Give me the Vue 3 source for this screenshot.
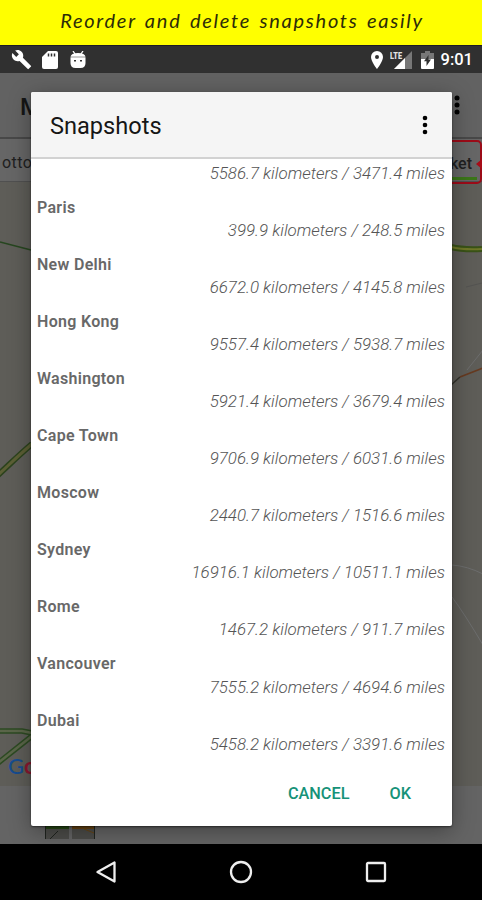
<script setup>
import { ref } from 'vue';

// The first entry is scrolled under the header, only its distance shows
const snapshots = ref([
  { id: 1, name: '', distance: '5586.7 kilometers / 3471.4 miles' },
  { id: 2, name: 'Paris', distance: '399.9 kilometers / 248.5 miles' },
  { id: 3, name: 'New Delhi', distance: '6672.0 kilometers / 4145.8 miles' },
  { id: 4, name: 'Hong Kong', distance: '9557.4 kilometers / 5938.7 miles' },
  { id: 5, name: 'Washington', distance: '5921.4 kilometers / 3679.4 miles' },
  { id: 6, name: 'Cape Town', distance: '9706.9 kilometers / 6031.6 miles' },
  { id: 7, name: 'Moscow', distance: '2440.7 kilometers / 1516.6 miles' },
  { id: 8, name: 'Sydney', distance: '16916.1 kilometers / 10511.1 miles' },
  { id: 9, name: 'Rome', distance: '1467.2 kilometers / 911.7 miles' },
  { id: 10, name: 'Vancouver', distance: '7555.2 kilometers / 4694.6 miles' },
  { id: 11, name: 'Dubai', distance: '5458.2 kilometers / 3391.6 miles' },
]);
</script>

<template>
  <div class="page">
    <div class="banner"><span>Reorder and delete snapshots easily</span></div>

    <div class="status-bar">
      <svg class="wrench" width="21" height="21" viewBox="0 0 24 24">
        <path fill="#fff" d="M22.7 19l-9.1-9.1c.9-2.3.4-5-1.5-6.9-2-2-5-2.4-7.4-1.3L9 6 6 9 1.6 4.7C.4 7.1.9 10.1 2.9 12.100c1.900 1.900 4.600 2.400 6.900 1.500l9.100 9.100c.4.4 1 .4 1.400 0l2.300-2.300c.5-.4.5-1.100.1-1.400z" />
      </svg>
      <svg class="sd-card" width="16" height="18" viewBox="0 0 16 18">
        <path fill="#fff" d="M6 0h8q2 0 2 2v14q0 2-2 2H2q-2 0-2-2V6z" />
        <path stroke="#303030" stroke-width="1.500" d="M6.500 2.500v3M9.500 2.500v3M12.500 2.500v3" />
      </svg>
      <svg class="android" width="16" height="18" viewBox="0 0 16 18">
        <path stroke="#fff" stroke-width="1.300" d="M3 0l2 3M13 0l-2 3" />
        <path fill="#fff" d="M.5 5.800Q1 2 8 2t7.500 3.800z" />
        <path fill="#fff" d="M.5 6.300h15V12q0 5-5 5h-5q-5 0-5-5z" />
        <path fill="#303030" d="M4 9h2v1.500H4zM10 9h2v1.500h-2z" />
      </svg>
      <span class="spacer"></span>
      <svg class="pin" width="12" height="18" viewBox="0 0 12 18">
        <path fill="#fff" fill-rule="evenodd" d="M6 0a6 6 0 0 0-6 6c0 4.500 6 12 6 12s6-7.500 6-12a6 6 0 0 0-6-6zm0 4a2 2 0 1 1 0 4 2 2 0 0 1 0-4z" />
      </svg>
      <svg class="signal" width="22" height="18" viewBox="0 0 22 18">
        <path fill="#777" d="M22 0v18H4z" />
        <path fill="#fff" d="M15 7v11H4z" />
        <path fill="#303030" d="M0 0h13v8H0z" />
        <text x="0" y="7.500" font-size="9.500" font-weight="900" font-family="Roboto, sans-serif" fill="#e4e4e4" textLength="12" lengthAdjust="spacingAndGlyphs">LTE</text>
      </svg>
      <svg class="battery" width="13" height="18" viewBox="0 0 13 18">
        <path fill="#777" d="M4 0h5v2h4v6H0V2h4z" />
        <path fill="#fff" d="M0 8h13v9q0 1-1 1H1q-1 0-1-1z" />
        <path fill="#303030" d="M7.500 4v4.500H10L5.500 15v-4.700H3z" />
      </svg>
      <span class="clock">9:01</span>
    </div>

    <div class="screen">
      <div class="app-bar">
        <span class="app-title">M</span>
        <svg width="6" height="20" viewBox="0 0 6 20">
          <circle cx="3" cy="3" r="2.500" /><circle cx="3" cy="10" r="2.500" /><circle cx="3" cy="17" r="2.500" />
        </svg>
      </div>
      <div class="tabs">
        <span class="tab-left">otto</span>
        <span class="tab-right">ket
          <svg class="marker" width="6" height="10" viewBox="0 0 6 10"><path fill="#a80c18" d="M6 0v10L0 5z" /></svg>
        </span>
      </div>
      <div class="map">
        <svg width="482" height="604" viewBox="0 0 482 604" fill="none">
          <path stroke="#26461f" stroke-width="1.500" d="M0 60l31 8" />
          <path stroke="#2c431d" stroke-width="6" d="M-2 293C10 282 20 272 32 262" />
          <path stroke="#5c5f35" stroke-width="3" d="M-2 293C10 282 20 272 32 262" />
          <path stroke="#2c4a22" stroke-width="5.500" d="M0 549h22l10 2M-2 581L32 554" />
          <path stroke="#5a6549" stroke-width="2.500" d="M0 549h22l10 2M-2 581L32 554" />
          <path stroke="#395217" stroke-width="6" d="M451 65q12 3 31 2" />
          <path stroke="#6e7728" stroke-width="2" d="M451 65q12 3 31 2" />
          <path stroke="#6c6d6d" d="M467 188l16-20M452 383q15 1 31 9M452 415q12 16 31 48" />
          <path stroke="#545451" d="M466 105l16-4" />
          <path stroke="#30312a" stroke-width="1.500" d="M451 203l9-8" />
          <path stroke="#663a20" stroke-width="1.800" d="M460 195l23-9" />
        </svg>
        <span class="google"><b>G</b><i>o</i></span>
      </div>
      <div class="strip">
        <svg width="50" height="14" viewBox="0 0 50 14">
          <path fill="#4c4c49" d="M0 1h24v12H0zM27 1h23v12H27z" />
          <path fill="#284916" d="M0 0h24v3H0z" /><path fill="#684514" d="M27 0h23v3H27z" />
          <path stroke="#20241f" fill="none" d="M.5 0v13M5 13l8-8M49.500 0v13" />
          <path stroke="#684514" d="M39 3l10 4" />
        </svg>
      </div>

      <div class="dialog">
        <div class="dialog-header">
          <h2>Snapshots</h2>
          <svg width="6" height="20" viewBox="0 0 6 20">
            <circle cx="3" cy="3" r="2.300" /><circle cx="3" cy="10" r="2.300" /><circle cx="3" cy="17" r="2.300" />
          </svg>
        </div>
        <div class="snapshot-list">
          <div v-for="snapshot in snapshots" :key="snapshot.id" class="snapshot">
            <span v-if="snapshot.name" class="name">{{ snapshot.name }}</span>
            <span class="distance">{{ snapshot.distance }}</span>
          </div>
        </div>
        <div class="actions">
          <button type="button">CANCEL</button>
          <button type="button">OK</button>
        </div>
      </div>
    </div>

    <div class="nav-bar">
      <svg width="22" height="24" viewBox="0 0 22 24"><path d="M19.500 2.500v19L2.500 12z" /></svg>
      <svg width="24" height="24" viewBox="0 0 24 24"><circle cx="12" cy="12" r="10" /></svg>
      <svg width="22" height="24" viewBox="0 0 22 24"><rect x="2" y="3" width="18" height="18" rx="1" /></svg>
    </div>
  </div>
</template>

<style>
body {
  margin: 0;
  background-color: #000;
}
</style>

<style scoped>
.page {
  width: 482px;
  height: 900px;
  display: flex;
  flex-direction: column;
  overflow: hidden;
  font-family: Roboto, sans-serif;
}

.banner {
  height: 45px;
  box-sizing: border-box;
  padding: 0 0 5px 2px;
  background-color: #ffff00;
  color: #2c2c08;
  display: flex;
  align-items: center;
  justify-content: center;
  font-family: "Segoe Script", "Bradley Hand", Lato, cursive;
  font-style: italic;
  font-size: 20px;
  letter-spacing: 1.75px;
  word-spacing: 2px;
  white-space: nowrap;
}

.status-bar {
  height: 28px;
  box-sizing: border-box;
  padding: 0 9px 0 11px;
  background-color: #303030;
  border-top: 1px solid #1c1c24;
  display: flex;
  align-items: center;
}

.sd-card {
  margin-left: 10px;
}

.android {
  margin-left: 12px;
}

.spacer {
  flex-grow: 1;
}

.signal {
  margin-left: 7px;
}

.battery {
  margin-left: 9px;
}

.clock {
  margin-left: 7px;
  color: #fff;
  font-size: 16.5px;
  font-weight: 500;
  line-height: 26px;
}

.screen {
  position: relative;
  height: 771px;
  display: flex;
  flex-direction: column;
  background-color: #646464;
}

.app-bar {
  height: 66px;
  box-sizing: border-box;
  padding: 0 22px 0 20px;
  border-bottom: 2px solid #484848;
  background-color: #626262;
  display: flex;
  align-items: center;
  justify-content: space-between;
}

.app-title {
  padding-top: 3px;
  font-size: 24px;
  font-weight: 500;
  color: #151515;
}

.tabs {
  position: relative;
  z-index: 1;
  height: 43px;
  box-sizing: border-box;
  border-bottom: 1px solid #505050;
  background-color: #666;
  display: flex;
  justify-content: space-between;
}

.tab-left {
  padding-left: 2px;
  font-size: 16px;
  line-height: 47px;
  letter-spacing: 0.4px;
  color: #202020;
}

.tab-right {
  position: relative;
  width: 60px;
  height: 44px;
  margin-top: 1px;
  box-sizing: border-box;
  padding-right: 8px;
  border: 2px solid #9c0b18;
  border-radius: 5px;
  background: linear-gradient(#3b7619, #3b7619) 0 35px / 53px 3px no-repeat;
  text-align: right;
  font-size: 16px;
  line-height: 43px;
  font-weight: 500;
  color: #202020;
}

.marker {
  position: absolute;
  right: -2px;
  top: 17px;
}

.map {
  position: relative;
  height: 604px;
  background-color: #5e5d58;
}

.map svg {
  display: block;
}

.google {
  position: absolute;
  left: 8px;
  bottom: 7px;
  font-family: Lato, sans-serif;
  font-size: 22px;
  line-height: 26px;
}

.google b {
  font-weight: 500;
  color: #164c8f;
}

.google i {
  font-style: normal;
  font-weight: 700;
  color: #8b1730;
}

.strip {
  flex-grow: 1;
  display: flex;
  align-items: flex-end;
  padding: 0 0 4px 45px;
}

.dialog {
  position: absolute;
  z-index: 2;
  left: 31px;
  top: 19px;
  width: 421px;
  height: 734px;
  border-radius: 2px;
  background-color: #fff;
  box-shadow: 0 1px 2px rgba(0, 0, 0, 0.5), 0 5px 22px rgba(0, 0, 0, 0.35);
  display: flex;
  flex-direction: column;
  overflow: hidden;
}

.dialog-header {
  height: 67px;
  flex-shrink: 0;
  box-sizing: border-box;
  padding: 0 24px 0 19px;
  border-bottom: 2px solid #d2d2d2;
  background-color: #f5f5f5;
  display: flex;
  align-items: center;
  justify-content: space-between;
}

.dialog-header h2 {
  margin: 0;
  padding-top: 3px;
  font-size: 23.6px;
  font-weight: 400;
  color: #161616;
}

.snapshot-list {
  height: 604px;
  flex-shrink: 0;
  overflow: hidden;
}

.snapshot {
  height: 57.1px;
  box-sizing: border-box;
  padding: 4.5px 7px 8.3px 6px;
  display: flex;
  flex-direction: column;
  justify-content: space-between;
}

.snapshot:first-child {
  height: 33px;
  padding-top: 3px;
}

.name {
  font-size: 16px;
  font-weight: 600;
  line-height: 22px;
  letter-spacing: 0.3px;
  color: #686868;
}

.distance {
  align-self: flex-end;
  font-size: 16.9px;
  font-weight: 300;
  font-style: italic;
  line-height: 22px;
  color: #555;
}

.actions {
  flex-grow: 1;
  display: flex;
  justify-content: flex-end;
  align-items: flex-start;
  gap: 40px;
  padding: 19px 41px 0 0;
}

.actions button {
  padding: 0;
  border: none;
  background: none;
  font-family: inherit;
  font-size: 16.3px;
  font-weight: 500;
  line-height: 24px;
  color: #169278;
}

.nav-bar {
  height: 56px;
  background-color: #000;
  display: flex;
  align-items: center;
  justify-content: center;
  gap: 112px;
}

.nav-bar svg {
  fill: none;
  stroke: #eee;
  stroke-width: 2.3;
  stroke-linejoin: round;
}
</style>
